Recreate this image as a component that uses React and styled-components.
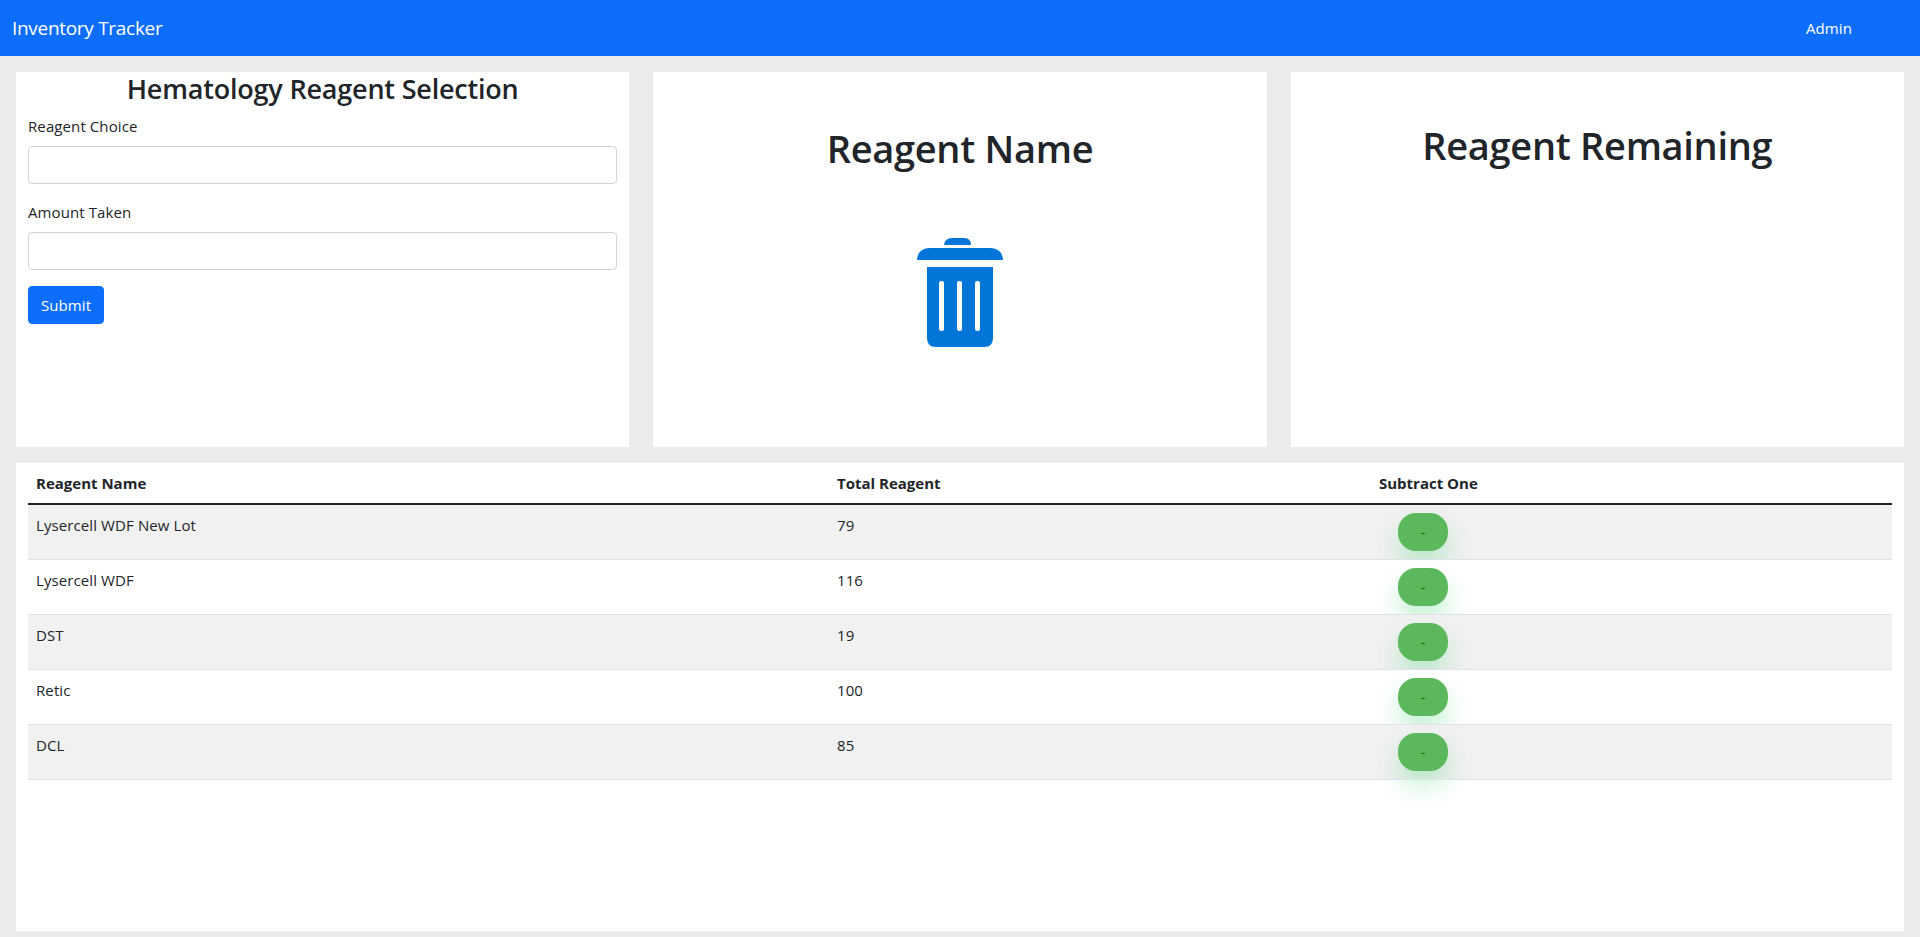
import styled, { createGlobalStyle } from "styled-components"

const Global = createGlobalStyle`
    * { box-sizing: border-box; }
    html, body { margin: 0; padding: 0; }
    body {
        background: #ebebeb;
        color: #212529;
        font-family: "Open Sans", "Noto Sans", "Liberation Sans", sans-serif;
        font-size: 16px;
        line-height: 1.5;
    }
`

const Page = styled.div`
    height: 937px;
    display: flex;
    flex-direction: column;
    overflow: hidden;
`

const Navbar = styled.nav`
    height: 56px;
    flex: none;
    background: #0d6efd;
    display: flex;
    align-items: center;
    justify-content: space-between;
    padding: 0 68px 0 12px;
    color: #fff;
`

const Brand = styled.span`
    font-size: 19px;
    letter-spacing: -0.3px;
`

const NavLink = styled.span`
    font-size: 15px;
    letter-spacing: 0.1px;
`

const Content = styled.main`
    flex: 1;
    display: flex;
    flex-direction: column;
    gap: 16px;
    padding: 16px 16px 6px;
`

const TopRow = styled.div`
    height: 375px;
    flex: none;
    display: grid;
    grid-template-columns: repeat(3, 1fr);
    gap: 24px;
`

const Card = styled.section`
    background: #fff;
    padding: ${(p) => p.$padding || "0"};
    display: flex;
    flex-direction: column;
    align-items: ${(p) => (p.$center ? "center" : "stretch")};
`

const FormTitle = styled.h3`
    margin: 0 0 8px;
    font-size: 27px;
    font-weight: 600;
    line-height: 34px;
    text-align: center;
    letter-spacing: -0.2px;
`

const PanelTitle = styled.h1`
    margin: 0;
    font-size: 38px;
    font-weight: 600;
    line-height: 48px;
    letter-spacing: -0.3px;
`

const Label = styled.label`
    display: block;
    font-size: 15px;
    line-height: 24px;
    letter-spacing: 0.1px;
    margin-bottom: 8px;
`

const Input = styled.input`
    display: block;
    width: 100%;
    height: 38px;
    border: 1px solid #ced4da;
    border-radius: 4px;
    background: #fff;
    margin-bottom: 16px;
`

const SubmitButton = styled.button`
    align-self: flex-start;
    width: 76px;
    height: 38px;
    border: 1px solid #0d6efd;
    border-radius: 4px;
    background: #0d6efd;
    color: #fff;
    font-family: inherit;
    font-size: 15px;
    letter-spacing: 0.1px;
    padding: 0;
`

const TrashIcon = styled.svg`
    display: block;
    width: 86px;
    height: 109px;
    margin-top: 66px;
    fill: #0275d8;
`

const TableCard = styled.section`
    flex: 1;
    background: #fff;
    padding: 0 12px;
`

const Table = styled.table`
    width: 100%;
    table-layout: fixed;
    border-collapse: collapse;
`

const HeadCell = styled.th`
    width: ${(p) => p.$width || "auto"};
    height: 41px;
    padding: 0 8px;
    text-align: left;
    font-size: 15px;
    font-weight: 700;
    letter-spacing: 0;
    border-bottom: 2px solid #212529;
`

const Row = styled.tr`
    background: ${(p) => (p.$striped ? "#f1f1f1" : "#fff")};
    border-bottom: 1px solid #dee2e6;
`

const Cell = styled.td`
    height: 55px;
    padding: 8px 8px 0;
    vertical-align: top;
    font-size: 15px;
    line-height: 24px;
    letter-spacing: 0.1px;
`

const MinusButton = styled.button`
    display: block;
    width: 50px;
    height: 38px;
    margin-left: 19px;
    border: none;
    border-radius: 18px;
    padding: 0;
    background: #5cb85c;
    color: #006400;
    font-family: inherit;
    font-size: 13px;
    box-shadow: 0 14px 25px rgba(60, 210, 110, 0.3);
`

const reagents = [
    { name: "Lysercell WDF New Lot", total: 79 },
    { name: "Lysercell WDF", total: 116 },
    { name: "DST", total: 19 },
    { name: "Retic", total: 100 },
    { name: "DCL", total: 85 },
]

export default function App() {
    return (
        <Page>
            <Global />
            <Navbar>
                <Brand>Inventory Tracker</Brand>
                <NavLink>Admin</NavLink>
            </Navbar>
            <Content>
                <TopRow>
                    <Card $padding="0 12px">
                        <FormTitle>Hematology Reagent Selection</FormTitle>
                        <Label>Reagent Choice</Label>
                        <Input />
                        <Label>Amount Taken</Label>
                        <Input />
                        <SubmitButton>Submit</SubmitButton>
                    </Card>
                    <Card $center $padding="52px 0 0">
                        <PanelTitle>Reagent Name</PanelTitle>
                        <TrashIcon viewBox="0 0 86 109">
                            <path d="M27 7 Q28 0 35 0 H47 Q54 0 54 7 Z" />
                            <path d="M0 22 Q1 10 13 10 H73 Q85 10 86 22 Z" />
                            <path
                                fillRule="evenodd"
                                d="M10 29 H76 V100 Q76 109 67 109 H19 Q10 109 10 100 Z M24 43 Q22 43 22 45 V91 Q22 93 24 93 H25 Q27 93 27 91 V45 Q27 43 25 43 Z M42 43 Q40 43 40 45 V91 Q40 93 42 93 H43 Q45 93 45 91 V45 Q45 43 43 43 Z M60 43 Q58 43 58 45 V91 Q58 93 60 93 H61 Q63 93 63 91 V45 Q63 43 61 43 Z"
                            />
                        </TrashIcon>
                    </Card>
                    <Card $center $padding="49px 0 0">
                        <PanelTitle>Reagent Remaining</PanelTitle>
                    </Card>
                </TopRow>
                <TableCard>
                    <Table>
                        <thead>
                            <tr>
                                <HeadCell $width="801px">Reagent Name</HeadCell>
                                <HeadCell $width="542px">Total Reagent</HeadCell>
                                <HeadCell>Subtract One</HeadCell>
                            </tr>
                        </thead>
                        <tbody>
                            {reagents.map((r, i) => (
                                <Row key={r.name} $striped={i % 2 === 0}>
                                    <Cell>{r.name}</Cell>
                                    <Cell>{r.total}</Cell>
                                    <Cell>
                                        <MinusButton>-</MinusButton>
                                    </Cell>
                                </Row>
                            ))}
                        </tbody>
                    </Table>
                </TableCard>
            </Content>
        </Page>
    )
}
